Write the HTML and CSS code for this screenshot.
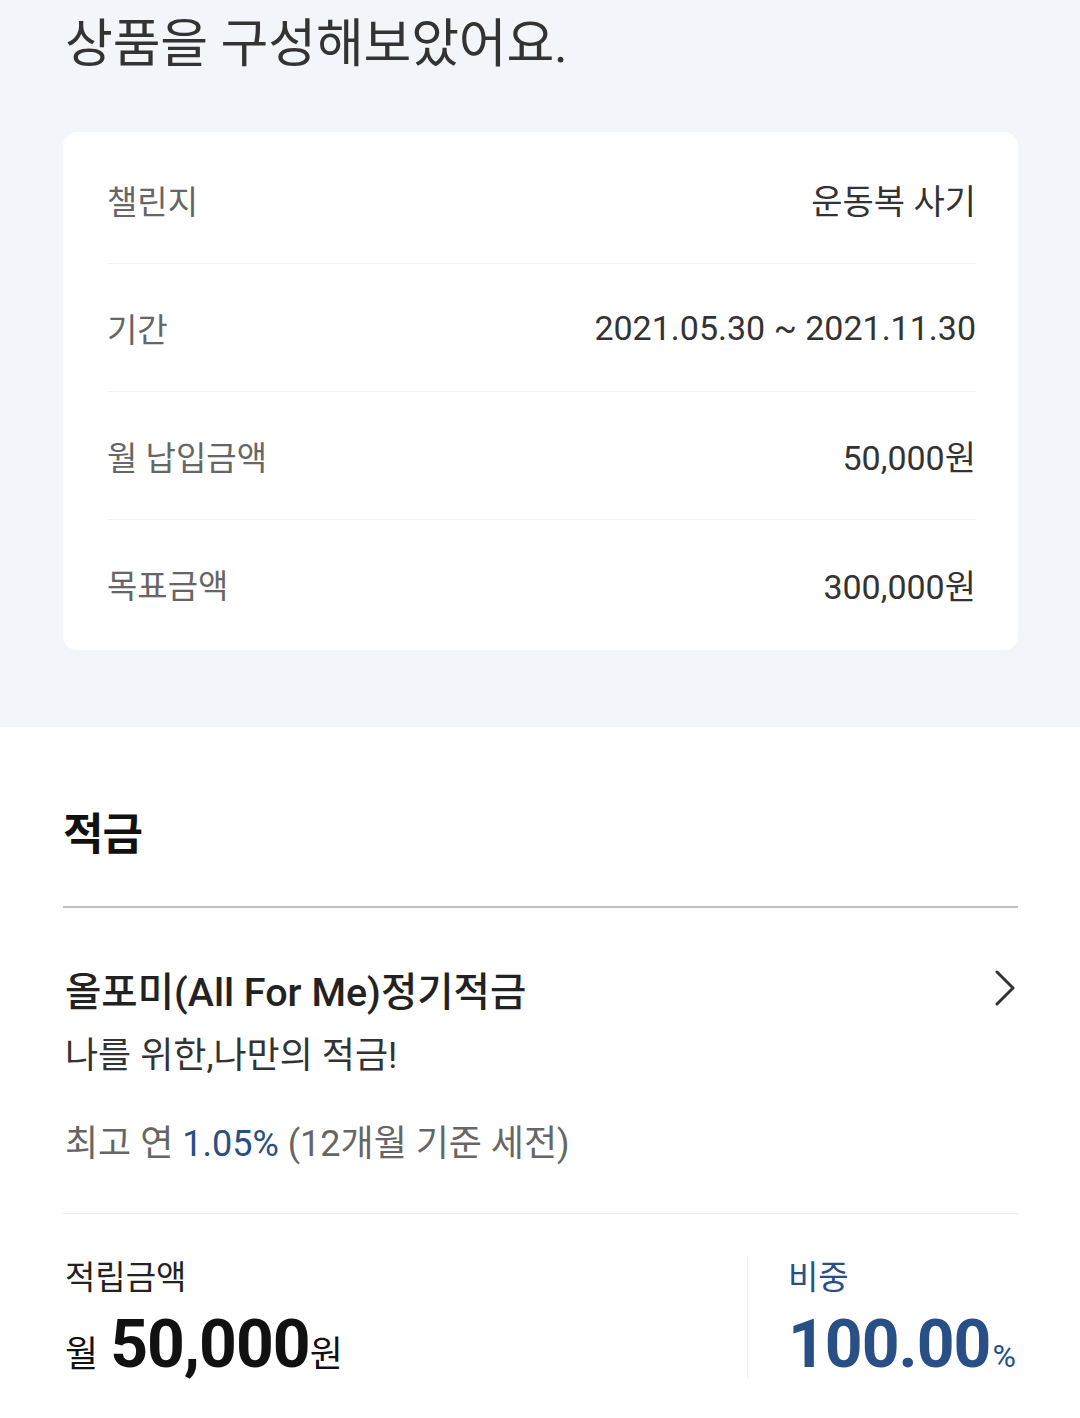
FILE: index.html
```html
<!DOCTYPE html>
<html lang="ko">
<head>
	<meta charset="UTF-8">
	<title>상품 구성</title>
	<link rel="stylesheet" href="styles.css">
</head>
<body>
	<div class="top">
		<h1 class="title">상품을 구성해보았어요.</h1>
		<div class="card">
			<div class="row">
				<span class="label">챌린지</span>
				<span class="value">운동복 사기</span>
			</div>
			<div class="row">
				<span class="label">기간</span>
				<span class="value">2021.05.30 ~ 2021.11.30</span>
			</div>
			<div class="row">
				<span class="label">월 납입금액</span>
				<span class="value">50,000원</span>
			</div>
			<div class="row">
				<span class="label">목표금액</span>
				<span class="value">300,000원</span>
			</div>
		</div>
	</div>

	<div class="section">
		<h2 class="heading">적금</h2>
		<div class="product">
			<div class="product-head">
				<span class="product-name">올포미(All For Me)정기적금</span>
				<svg class="chevron" width="22" height="36" viewBox="0 0 22 36">
					<polyline points="3,2 19,18 3,34" fill="none" stroke="#333" stroke-width="3" stroke-linecap="round" stroke-linejoin="round"/>
				</svg>
			</div>
			<p class="product-desc">나를 위한,나만의 적금!</p>
			<p class="rate">최고 연 <span class="blue">1.05%</span> (12개월 기준 세전)</p>
		</div>
		<div class="summary">
			<div class="col">
				<div class="col-label">적립금액</div>
				<div class="amount">
					<span class="unit unit-pre">월</span>
					<span class="num">50,000</span>
					<span class="unit">원</span>
				</div>
			</div>
			<div class="col col-right">
				<div class="col-label blue">비중</div>
				<div class="amount blue">
					<span class="num">100.00</span>
					<span class="unit pct">%</span>
				</div>
			</div>
		</div>
	</div>
</body>
</html>
```

FILE: styles.css
```css
body{
	margin: 0;
	font-family: Roboto, "Noto Sans CJK KR", sans-serif;
	background-color: #fff;
}
.top{
	background-color: #f2f5f9;
	padding: 10px 62px 77px 63px;
}
.title{
	margin: 0;
	padding-left: 2px;
	font-size: 52px;
	line-height: 70px;
	font-weight: 400;
	letter-spacing: -0.2px;
	color: #333;
}
.card{
	margin-top: 52px;
	padding: 4px 42px 2px 44px;
	background-color: #fff;
	border-radius: 14px;
}
.row{
	display: flex;
	justify-content: space-between;
	align-items: center;
	height: 128px;
	box-sizing: border-box;
	border-bottom: 1px solid #f3f3f3;
}
.row:last-child{
	border-bottom: none;
}
.label{
	font-size: 33px;
	color: #666;
}
.value{
	font-size: 34px;
	color: #333;
}
.section{
	padding: 78px 62px 0 63px;
}
.heading{
	margin: 0;
	font-size: 44px;
	line-height: 60px;
	font-weight: 700;
	letter-spacing: -1px;
	color: #111;
}
.product{
	margin-top: 41px;
	padding: 54px 0 45px;
	border-top: 2px solid #c0c0c0;
	border-bottom: 1px solid #eee;
}
.product-head{
	display: flex;
	justify-content: space-between;
	align-items: center;
	height: 52px;
}
.product-name{
	padding-left: 2px;
	font-size: 39.5px;
	font-weight: 500;
	color: #222;
}
.chevron{
	margin-right: 2px;
}
.product-desc{
	margin: 18px 0 0;
	padding-left: 2px;
	font-size: 36px;
	line-height: 48px;
	color: #333;
}
.rate{
	margin: 40px 0 0;
	padding-left: 2px;
	font-size: 36px;
	line-height: 48px;
	color: #666;
}
.blue{
	color: #284f86;
}
.summary{
	display: flex;
	align-items: flex-start;
	padding-top: 42px;
}
.col{
	flex: 1;
	padding-left: 2px;
}
.col-right{
	flex: 0 0 230px;
	height: 122px;
	padding-left: 40px;
	border-left: 1px solid #eee;
}
.col-label{
	font-size: 33px;
	line-height: 44px;
	color: #222;
}
.col-label.blue{
	color: #284f86;
}
.amount{
	display: flex;
	align-items: baseline;
	padding-top: 6px;
	line-height: 78px;
	color: #111;
}
.amount.blue{
	color: #284f86;
}
.num{
	font-size: 66px;
	font-weight: 700;
	letter-spacing: -1px;
}
.unit{
	font-size: 36px;
}
.unit-pre{
	margin-right: 12px;
}
.pct{
	font-size: 32px;
	margin-left: 2px;
}
```
